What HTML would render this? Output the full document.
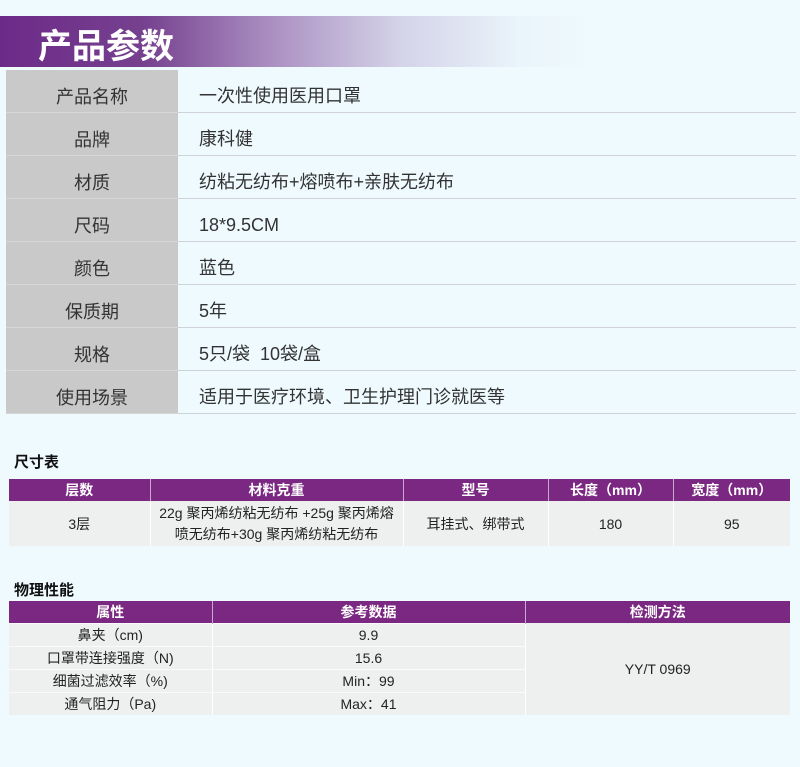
<!DOCTYPE html>
<html><head><meta charset="utf-8"><style>
*{margin:0;padding:0;box-sizing:border-box}
body{width:800px;height:767px;background:#eefafe;font-family:"Liberation Sans","Noto Sans CJK SC",sans-serif;color:#333;position:relative;overflow:hidden}
.band{position:absolute;left:0;top:16px;width:800px;height:51px;background:linear-gradient(90deg,#6c2a88 0%,#76418f 18%,#a88bbf 33%,#d4d3e8 50%,#eaf4fb 65%,#eefafe 74%)}
.band span{position:absolute;left:38px;top:3px;font-size:34px;font-weight:bold;color:#fff;letter-spacing:0px}
.pt{position:absolute;left:6px;top:70px;width:790px}
.pt .r{height:43px;display:flex;border-bottom:1px solid #cfd3d6}
.pt .r .l{width:172px;background:#c9c9c9;font-size:18px;text-align:center;line-height:54px;border-bottom:1px solid #d6d6d6;margin-bottom:-1px}
.pt .r .v{padding-left:21px;font-size:18px;line-height:52px}
h3{position:absolute;left:14px;font-size:15px;font-weight:bold;color:#111}
table{position:absolute;left:9px;width:781px;border-collapse:collapse;font-size:14px;text-align:center}
th{background:#7b2882;color:#fff;font-weight:bold;border-left:1px solid #c9a8d2;height:22px;padding:0}
th:first-child{border-left:none}
td{background:#eef0f0;border-left:1px solid #fff;padding:0;color:#222}
td:first-child{border-left:none}
.ph td{border-top:1px solid #fafafa;height:23px}
</style></head><body>
<div class="band"><span>产品参数</span></div>
<div class="pt">
<div class="r"><div class="l">产品名称</div><div class="v">一次性使用医用口罩</div></div>
<div class="r"><div class="l">品牌</div><div class="v">康科健</div></div>
<div class="r"><div class="l">材质</div><div class="v">纺粘无纺布+熔喷布+亲肤无纺布</div></div>
<div class="r"><div class="l">尺码</div><div class="v">18*9.5CM</div></div>
<div class="r"><div class="l">颜色</div><div class="v">蓝色</div></div>
<div class="r"><div class="l">保质期</div><div class="v">5年</div></div>
<div class="r"><div class="l">规格</div><div class="v">5只/袋&nbsp; 10袋/盒</div></div>
<div class="r"><div class="l">使用场景</div><div class="v">适用于医疗环境、卫生护理门诊就医等</div></div>
</div>
<h3 style="top:451px">尺寸表</h3>
<table style="top:479px">
<tr><th style="width:141px">层数</th><th style="width:253px">材料克重</th><th style="width:145px">型号</th><th style="width:125px">长度（mm）</th><th>宽度（mm）</th></tr>
<tr><td style="height:45px">3层</td><td style="line-height:21px">22g 聚丙烯纺粘无纺布 +25g 聚丙烯熔<br>喷无纺布+30g 聚丙烯纺粘无纺布</td><td>耳挂式、绑带式</td><td>180</td><td>95</td></tr>
</table>
<h3 style="top:579px">物理性能</h3>
<table class="ph" style="top:601px">
<tr><th style="width:203px">属性</th><th style="width:313px">参考数据</th><th>检测方法</th></tr>
<tr><td>鼻夹（cm)</td><td>9.9</td><td rowspan="4" style="border-top:none">YY/T 0969</td></tr>
<tr><td>口罩带连接强度（N)</td><td>15.6</td></tr>
<tr><td>细菌过滤效率（%)</td><td>Min：99</td></tr>
<tr><td>通气阻力（Pa)</td><td>Max：41</td></tr>
</table>
</body></html>
